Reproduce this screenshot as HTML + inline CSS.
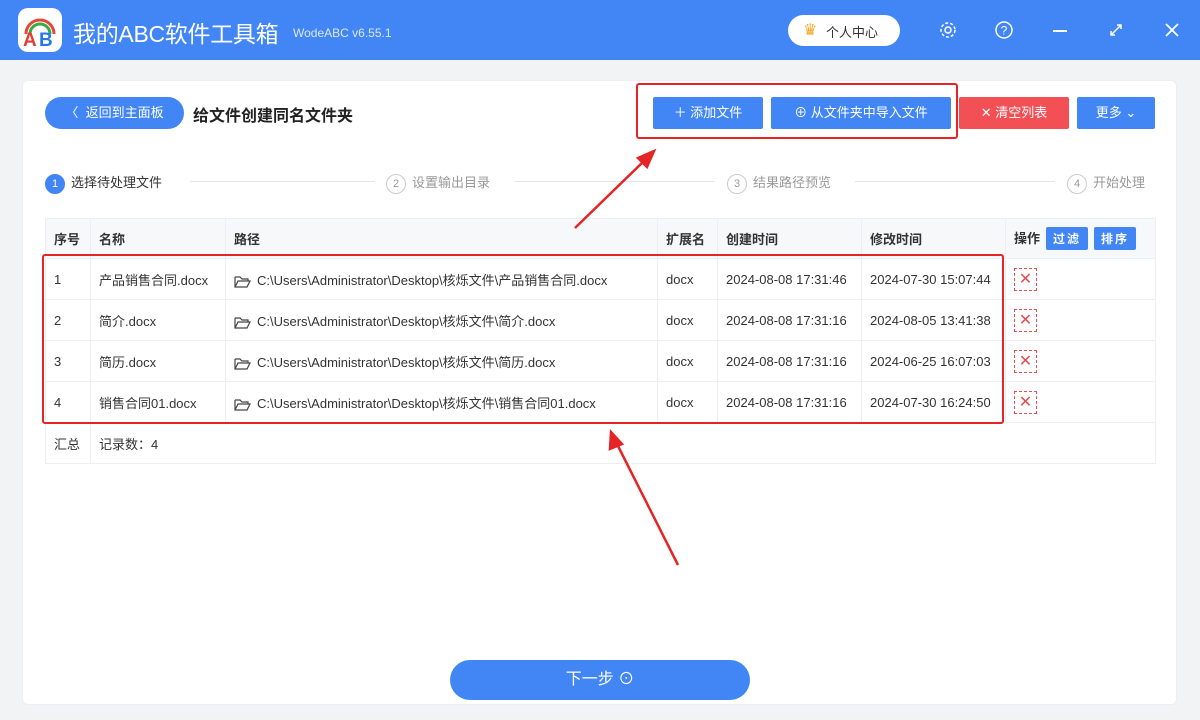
<!DOCTYPE html>
<html><head><meta charset="utf-8"><style>
*{margin:0;padding:0;box-sizing:border-box}
body{width:1200px;height:720px;background:#f2f3f5;font-family:"Liberation Sans","Noto Sans CJK SC",sans-serif;position:relative;overflow:hidden;color:#333}
.top{position:absolute;left:0;top:0;width:1200px;height:60px;background:#4286f5}
.logo{position:absolute;left:18px;top:8px;width:44px;height:44px;background:#fff;border-radius:10px}
.title{position:absolute;left:73px;top:15px;color:#fff;font-size:23px;letter-spacing:-0.3px}
.ver{position:absolute;left:293px;top:26px;color:#dbe7fd;font-size:12px}
.uc{position:absolute;left:788px;top:15px;width:112px;height:31px;background:#fff;border-radius:16px;font-size:13px;padding:7px 0 0 38px;color:#333}
.panel{position:absolute;left:22px;top:80px;width:1155px;height:625px;background:#fff;border-radius:6px;border:1px solid #eceef2}
.btn{position:absolute;height:32px;color:#fff;font-size:13px;text-align:center;line-height:32px;background:#4286f5;border-radius:2px}
.ab{position:absolute}
table{position:absolute;left:45px;top:218px;border-collapse:collapse;font-size:13px;color:#333}
td{border:1px solid #ebeef5;padding:0 8px;height:41px;white-space:nowrap;vertical-align:middle}
tr.h td{background:#f7f8fa;font-weight:bold;height:40px}
.step{position:absolute;top:172px;font-size:13px;color:#999}
.circ{display:inline-block;width:20px;height:20px;border-radius:50%;border:1px solid #ccc;text-align:center;line-height:18px;font-size:11px;margin-right:6px;vertical-align:middle}
.line{position:absolute;top:181px;height:1px;background:#e5e5e5}
.x{display:inline-block;width:23px;height:23px;border:1px dashed #e05050;color:#e05050;text-align:center;line-height:21px;font-size:16px;vertical-align:middle}
.sm{display:inline-block;background:#4286f5;color:#fff;font-size:12px;padding:3px 7px;border-radius:2px;margin-left:6px;letter-spacing:2px}
.fd{display:inline-block;vertical-align:middle;margin-right:6px}
</style></head><body>
<div class="top"></div>
<div class="logo"><svg width="44" height="44"><path d="M8 26 A14 14 0 0 1 36 26" stroke="#e04a3a" stroke-width="3" fill="none"/><path d="M12 26 A10 10 0 0 1 32 26" stroke="#3aa846" stroke-width="3" fill="none"/><text x="5" y="38" font-size="19" font-weight="bold" fill="#e23d30" font-family="Liberation Sans">A</text><text x="21" y="38" font-size="19" font-weight="bold" fill="#2a78e8" font-family="Liberation Sans">B</text></svg></div>
<div class="title">我的ABC软件工具箱</div>
<div class="ver">WodeABC v6.55.1</div>
<div class="uc"><span style="position:absolute;left:15px;top:5px;color:#f5a623;font-size:16px">♛</span>个人中心</div>
<svg class="ab" style="left:938px;top:20px" width="20" height="20"><circle cx="10" cy="10" r="3" stroke="#fff" stroke-width="1.5" fill="none"/><circle cx="10" cy="10" r="7" stroke="#fff" stroke-width="1.5" stroke-dasharray="3 2" fill="none"/></svg>
<svg class="ab" style="left:994px;top:20px" width="20" height="20"><circle cx="10" cy="10" r="8" stroke="#fff" stroke-width="1.5" fill="none"/><text x="10" y="14.5" font-size="12" fill="#fff" text-anchor="middle" font-family="Liberation Sans">?</text></svg>
<div class="ab" style="left:1053px;top:30px;width:14px;height:2px;background:#fff"></div>
<svg class="ab" style="left:1108px;top:22px" width="16" height="16"><path d="M3 13 L13 3 M9 3 H13 V7 M3 9 V13 H7" stroke="#fff" stroke-width="1.5" fill="none"/></svg>
<svg class="ab" style="left:1164px;top:22px" width="16" height="16"><path d="M2 2 L14 14 M14 2 L2 14" stroke="#fff" stroke-width="1.8"/></svg>
<div class="panel"></div>
<div class="btn" style="left:45px;top:97px;width:139px;border-radius:16px">〈&nbsp; 返回到主面板</div>
<div class="ab" style="left:193px;top:102px;font-size:16px;font-weight:bold;color:#222">给文件创建同名文件夹</div>
<div class="btn" style="left:653px;top:97px;width:110px">＋ 添加文件</div>
<div class="btn" style="left:771px;top:97px;width:180px">⊕ 从文件夹中导入文件</div>
<div class="btn" style="left:959px;top:97px;width:110px;background:#f25055">✕ 清空列表</div>
<div class="btn" style="left:1077px;top:97px;width:78px">更多 ⌄</div>
<div class="ab" style="left:636px;top:83px;width:322px;height:56px;border:2px solid #e52525;border-radius:3px"></div>
<div class="step" style="left:45px;color:#333"><span class="circ" style="background:#4286f5;border-color:#4286f5;color:#fff">1</span>选择待处理文件</div>
<div class="line" style="left:190px;width:185px"></div>
<div class="step" style="left:386px"><span class="circ">2</span>设置输出目录</div>
<div class="line" style="left:515px;width:200px"></div>
<div class="step" style="left:727px"><span class="circ">3</span>结果路径预览</div>
<div class="line" style="left:855px;width:200px"></div>
<div class="step" style="left:1067px"><span class="circ">4</span>开始处理</div>
<table>
<tr class="h"><td style="width:45px">序号</td><td style="width:135px">名称</td><td style="width:432px">路径</td><td style="width:60px">扩展名</td><td style="width:144px">创建时间</td><td style="width:144px">修改时间</td><td style="width:150px">操作<span class="sm">过滤</span><span class="sm">排序</span></td></tr>
<tr><td>1</td><td>产品销售合同.docx</td><td><svg class="fd" width="17" height="13"><path d="M1 2 H6 L8 4 H14 V6 M1 2 V12 H13 L16 6 H4 L1 12" stroke="#444" stroke-width="1.2" fill="none"/></svg>C:\Users\Administrator\Desktop\核烁文件\产品销售合同.docx</td><td>docx</td><td>2024-08-08 17:31:46</td><td>2024-07-30 15:07:44</td><td><span class="x">✕</span></td></tr>
<tr><td>2</td><td>简介.docx</td><td><svg class="fd" width="17" height="13"><path d="M1 2 H6 L8 4 H14 V6 M1 2 V12 H13 L16 6 H4 L1 12" stroke="#444" stroke-width="1.2" fill="none"/></svg>C:\Users\Administrator\Desktop\核烁文件\简介.docx</td><td>docx</td><td>2024-08-08 17:31:16</td><td>2024-08-05 13:41:38</td><td><span class="x">✕</span></td></tr>
<tr><td>3</td><td>简历.docx</td><td><svg class="fd" width="17" height="13"><path d="M1 2 H6 L8 4 H14 V6 M1 2 V12 H13 L16 6 H4 L1 12" stroke="#444" stroke-width="1.2" fill="none"/></svg>C:\Users\Administrator\Desktop\核烁文件\简历.docx</td><td>docx</td><td>2024-08-08 17:31:16</td><td>2024-06-25 16:07:03</td><td><span class="x">✕</span></td></tr>
<tr><td>4</td><td>销售合同01.docx</td><td><svg class="fd" width="17" height="13"><path d="M1 2 H6 L8 4 H14 V6 M1 2 V12 H13 L16 6 H4 L1 12" stroke="#444" stroke-width="1.2" fill="none"/></svg>C:\Users\Administrator\Desktop\核烁文件\销售合同01.docx</td><td>docx</td><td>2024-08-08 17:31:16</td><td>2024-07-30 16:24:50</td><td><span class="x">✕</span></td></tr>
<tr><td style="height:39px">汇总</td><td colspan="6">记录数：4</td></tr>
</table>
<div class="ab" style="left:42px;top:254px;width:962px;height:170px;border:2px solid #e52525;border-radius:3px"></div>
<svg class="ab" style="left:0;top:0" width="1200" height="720"><g stroke="#e52525" stroke-width="2.5" fill="#e52525"><line x1="575" y1="228" x2="645" y2="160"/><polygon points="654,151 638,158 647,167"/><line x1="678" y1="565" x2="616" y2="442"/><polygon points="611,432 610,449 622,444"/></g></svg>
<div class="btn" style="left:450px;top:660px;width:300px;height:40px;line-height:40px;border-radius:20px;font-size:16px">下一步 ⊙</div>
</body></html>
